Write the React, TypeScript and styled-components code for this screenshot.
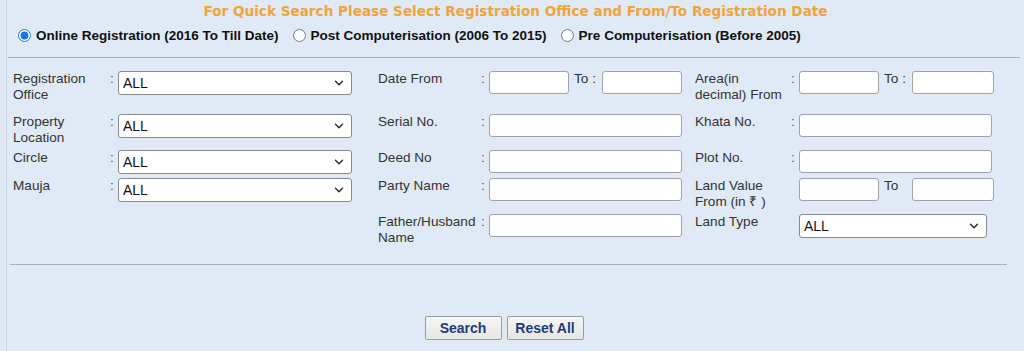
import styled, { createGlobalStyle } from 'styled-components';
import { ChevronDown } from 'lucide-react';

const GlobalStyle = createGlobalStyle`
    html, body {
        margin: 0;
        padding: 0;
        background: #e0eaf6;
        font-family: "Liberation Sans", Arial, sans-serif;
    }
`;

function SelectAll({ width }: { width: number }) {
    return (
        <SelectWrap style={{ width }}>
            <SelectBox defaultValue="ALL">
                <option>ALL</option>
            </SelectBox>
            <Chevron><ChevronDown size={14} strokeWidth={2.2} /></Chevron>
        </SelectWrap>
    )
}

function App() {
    return (
        <Page>
            <GlobalStyle />
            <Panel>
                <Title>For Quick Search Please Select Registration Office and From/To Registration Date</Title>
                <RadioRow>
                    <RadioLabel>
                        <Radio type="radio" name="mode" defaultChecked />
                        Online Registration (2016 To Till Date)
                    </RadioLabel>
                    <RadioLabel>
                        <Radio type="radio" name="mode" />
                        Post Computerisation (2006 To 2015)
                    </RadioLabel>
                    <RadioLabel>
                        <Radio type="radio" name="mode" />
                        Pre Computerisation (Before 2005)
                    </RadioLabel>
                </RadioRow>
                <Divider $right={4} />

                <FormGrid>
                    {/* row 1 */}
                    <Label>Registration Office</Label>
                    <Colon>:</Colon>
                    <Field><SelectAll width={234} /></Field>
                    <Label $indent={26}>Date From</Label>
                    <Colon>:</Colon>
                    <Field>
                        <TextInput $w={80} />
                        <ToText>To :</ToText>
                        <TextInput $w={80} />
                    </Field>
                    <Label $indent={12}>Area(in decimal) From</Label>
                    <Colon>:</Colon>
                    <Field>
                        <TextInput $w={80} />
                        <ToText>To :</ToText>
                        <TextInput $w={82} />
                    </Field>

                    {/* row 2 */}
                    <Label>Property Location</Label>
                    <Colon>:</Colon>
                    <Field><SelectAll width={234} /></Field>
                    <Label $indent={26}>Serial No.</Label>
                    <Colon>:</Colon>
                    <Field><TextInput $w={193} /></Field>
                    <Label $indent={12}>Khata No.</Label>
                    <Colon>:</Colon>
                    <Field><TextInput $w={193} /></Field>

                    {/* row 3 */}
                    <Label>Circle</Label>
                    <Colon>:</Colon>
                    <Field><SelectAll width={234} /></Field>
                    <Label $indent={26}>Deed No</Label>
                    <Colon>:</Colon>
                    <Field><TextInput $w={193} /></Field>
                    <Label $indent={12}>Plot No.</Label>
                    <Colon>:</Colon>
                    <Field><TextInput $w={193} /></Field>

                    {/* row 4 */}
                    <Label>Mauja</Label>
                    <Colon>:</Colon>
                    <Field><SelectAll width={234} /></Field>
                    <Label $indent={26}>Party Name</Label>
                    <Colon>:</Colon>
                    <Field><TextInput $w={193} /></Field>
                    <Label $indent={12}>Land Value From (in ₹ )</Label>
                    <Colon />
                    <Field>
                        <TextInput $w={80} />
                        <ToText>To</ToText>
                        <TextInput $w={82} />
                    </Field>

                    {/* row 5 */}
                    <Empty />
                    <Label $indent={26}>Father/Husband Name</Label>
                    <Colon>:</Colon>
                    <Field><TextInput $w={193} /></Field>
                    <Label $indent={12}>Land Type</Label>
                    <Colon />
                    <Field><SelectAll width={188} /></Field>
                </FormGrid>

                <Divider $left={3} $right={17} $top={18} />

                <ButtonRow>
                    <ActionButton type="button">Search</ActionButton>
                    <ActionButton type="button">Reset All</ActionButton>
                </ButtonRow>
            </Panel>
        </Page>
    )
}

const Page = styled.div`
    width: 1024px;
    height: 351px;
    padding-left: 6px;
    box-sizing: border-box;
    overflow: hidden;
`;

const Panel = styled.div`
    height: 100%;
    border-left: 1px solid #c8d9e9;
    display: flex;
    flex-direction: column;
`;

const Title = styled.div`
    height: 22px;
    line-height: 22px;
    text-align: center;
    font-family: "DejaVu Sans", Verdana, sans-serif;
    font-weight: bold;
    font-size: 13.6px;
    color: #f0a43a;
    white-space: nowrap;
`;

const RadioRow = styled.div`
    height: 24px;
    margin-top: 1px;
    padding-left: 11px;
    display: flex;
    align-items: center;
    gap: 14px;
`;

const RadioLabel = styled.label`
    display: flex;
    align-items: center;
    gap: 5px;
    font-weight: bold;
    font-size: 13.5px;
    color: #111;
    white-space: nowrap;
`;

const Radio = styled.input`
    width: 13px;
    height: 13px;
    margin: 0;
    accent-color: #1a73e8;
`;

const Divider = styled.div<{ $left?: number; $right?: number; $top?: number }>`
    height: 1px;
    background: #a7b0bd;
    margin-top: ${p => p.$top ?? 10}px;
    margin-left: ${p => p.$left ?? 1}px;
    margin-right: ${p => p.$right ?? 0}px;
`;

const FormGrid = styled.div`
    margin-top: 13px;
    padding-left: 6px;
    display: grid;
    grid-template-columns: 94px 11px 234px 126px 11px 194px 105px 11px 197px;
    grid-template-rows: 43px 36px 28px 36px 32px;
    color: #333;
    font-size: 13.6px;
`;

const Label = styled.div<{ $indent?: number }>`
    padding-left: ${p => p.$indent ?? 0}px;
    line-height: 16px;
`;

const Colon = styled.div`
    padding-left: 3px;
    line-height: 16px;
    color: #555;
`;

const Field = styled.div`
    display: flex;
    align-items: flex-start;
`;

const Empty = styled.div`
    grid-column: span 3;
`;

const TextInput = styled.input<{ $w: number }>`
    width: ${p => p.$w}px;
    height: 23px;
    box-sizing: border-box;
    margin: 0;
    border: 1px solid #a3a3a3;
    border-radius: 3px;
    background: #fff;
    font: inherit;
    padding: 0 4px;
`;

const ToText = styled.span`
    width: 33px;
    padding-left: 5px;
    box-sizing: border-box;
    line-height: 16px;
`;

const SelectWrap = styled.div`
    position: relative;
    height: 24px;
`;

const SelectBox = styled.select`
    width: 100%;
    height: 24px;
    margin: 0;
    box-sizing: border-box;
    appearance: none;
    border: 1px solid #8a8a8a;
    border-radius: 3px;
    background: #fff;
    padding: 0 4px;
    font-family: "Liberation Sans", Arial, sans-serif;
    font-size: 14px;
    color: #111;
`;

const Chevron = styled.span`
    position: absolute;
    right: 6px;
    top: 5px;
    color: #222;
    pointer-events: none;
    display: flex;
`;

const ButtonRow = styled.div`
    margin-top: 51px;
    display: flex;
    justify-content: center;
    gap: 5px;
    padding-right: 23px;
`;

const ActionButton = styled.button`
    height: 24px;
    min-width: 77px;
    padding: 0 7px;
    border: 1px solid #9a9a9a;
    border-radius: 2px;
    background: linear-gradient(#f6f6f6, #e6e6e6);
    font-family: "Liberation Sans", Arial, sans-serif;
    font-weight: bold;
    font-size: 14px;
    color: #1f3c78;
`;

export default App
